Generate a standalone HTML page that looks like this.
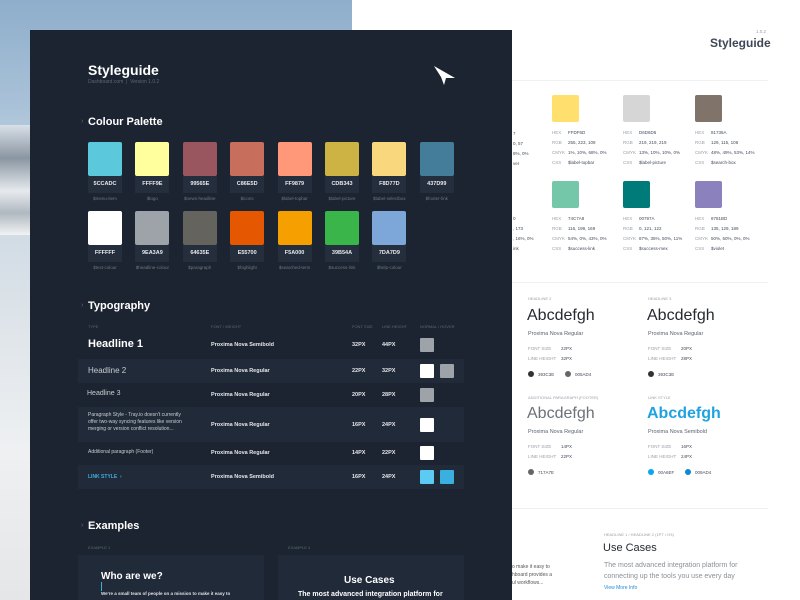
<!DOCTYPE html>
<html><head><meta charset="utf-8">
<style>
*{margin:0;padding:0;box-sizing:border-box}
body{width:800px;height:600px;overflow:hidden;position:relative;font-family:"Liberation Sans",sans-serif;background:#fff}
.bg{position:absolute;left:0;top:0;width:352px;height:600px;background:linear-gradient(180deg,#8eaecb 0%,#aac2d8 18%,#c9d6e2 30%,#dfe5ea 55%,#eef0f2 75%,#e4e6e8 100%)}
.mt{position:absolute;left:0;top:125px;width:30px;height:110px;background:linear-gradient(180deg,#d8e0e8 0%,#8a96a2 30%,#e6eaee 60%,#b0b8c0 80%,#f2f3f4 100%)}
.a{position:absolute;white-space:nowrap;line-height:1.15}
.dark{position:absolute;left:30px;top:30px;width:482px;height:570px;background:#1c2431}
.w{color:#fff}
.sw{position:absolute;width:34px;height:34px;border-radius:2px}
.lb{position:absolute;width:34px;height:17px;background:#252e3d;color:#e8eaee;font-size:5.5px;font-weight:bold;text-align:center;line-height:17px}
.nm{position:absolute;width:46px;color:#6d7686;font-size:4.5px;text-align:center}
.row{position:absolute;left:78px;width:386px;background:#212a39}
.t{font-size:5.5px;font-weight:bold;color:#e6e8ec}
.hd{font-size:4px;color:#5d6676}
.sq{position:absolute;width:14px;height:14px;border-radius:1px}
.g{color:#9aa0a8;font-size:4.5px}
.k{color:#444c5a;font-size:4.5px}
</style></head><body>
<div class="bg"></div><div class="mt"></div>
<div class="dark"></div>
<div class="a w" style="left:88px;top:63px;font-size:14px;font-weight:bold;line-height:1">Styleguide</div>
<div class="a" style="left:88px;top:80px;font-size:5px;color:#5d6676;line-height:1">Dashboard.com &nbsp;|&nbsp; Version 1.0.2</div>
<svg class="a" style="left:432px;top:64px" width="26" height="24" viewBox="0 0 26 24"><path d="M2 2 L23 14 L14 14 L12 21 L9 13 Z" fill="#fff"/></svg>

<div class="a" style="left:81px;top:118px;font-size:7px;color:#5d6676">›</div>
<div class="a w" style="left:88px;top:116px;font-size:11px;font-weight:bold">Colour Palette</div>
<div class="a" style="left:81px;top:302px;font-size:7px;color:#5d6676">›</div>
<div class="a w" style="left:88px;top:300px;font-size:11px;font-weight:bold">Typography</div>
<div class="a" style="left:81px;top:522px;font-size:7px;color:#5d6676">›</div>
<div class="a w" style="left:88px;top:520px;font-size:11px;font-weight:bold">Examples</div>

<div id="pal"></div>
<script>
var r1=[["#5cc8dc","5CCADC","$menu-item"],["#ffff9e","FFFF9E","$logo"],["#99565e","99565E","$news-headline"],["#c86e5d","C86E5D","$icons"],["#ff9879","FF9879","$label-topbar"],["#cdb343","CDB343","$label-picture"],["#f8d77d","F8D77D","$label-selectbox"],["#437d99","437D99","$footer-link"]];
var r2=[["#ffffff","FFFFFF","$text-colour"],["#9ea3a9","9EA3A9","$headline-colour"],["#64635e","64635E","$paragraph"],["#e55700","E55700","$highlight"],["#f5a000","F5A000","$searched-term"],["#39b54a","39B54A","$success-link"],["#7da7d9","7DA7D9","$help-colour"]];
var h="";
function row(r,y){r.forEach(function(c,i){var x=88+i*47.4;
h+='<div class="sw" style="left:'+x+'px;top:'+y+'px;background:'+c[0]+'"></div>';
h+='<div class="lb" style="left:'+x+'px;top:'+(y+34)+'px">'+c[1]+'</div>';
h+='<div class="nm a" style="left:'+(x-6)+'px;top:'+(y+54)+'px">'+c[2]+'</div>';});}
row(r1,142);row(r2,211);
document.getElementById("pal").innerHTML=h;
</script>

<div class="a hd" style="left:88px;top:325px">TYPE</div>
<div class="a hd" style="left:211px;top:325px">FONT / WEIGHT</div>
<div class="a hd" style="left:352px;top:325px">FONT SIZE</div>
<div class="a hd" style="left:382px;top:325px">LINE HEIGHT</div>
<div class="a hd" style="left:420px;top:325px">NORMAL / HOVER</div>

<div class="row" style="top:359px;height:24px"></div>
<div class="row" style="top:407px;height:35px"></div>
<div class="row" style="top:465px;height:24px"></div>

<div class="a w" style="left:88px;top:338px;font-size:11px;font-weight:bold">Headline 1</div>
<div class="a" style="left:88px;top:366px;font-size:8px;color:#c8ccd2">Headline 2</div>
<div class="a" style="left:87px;top:390px;font-size:7px;color:#c8ccd2">Headline 3</div>
<div class="a" style="left:88px;top:412px;font-size:5px;line-height:7px;color:#c8ccd2">Paragraph Style - Tray.io doesn't currently<br>offer two-way syncing features like version<br>merging or version conflict resolution...</div>
<div class="a" style="left:88px;top:450px;font-size:5px;color:#c8ccd2">Additional paragraph (Footer)</div>
<div class="a" style="left:88px;top:475px;font-size:5px;font-weight:bold;color:#3eaee0">LINK STYLE &nbsp;›</div>

<div class="a t" style="left:211px;top:342px">Proxima Nova Semibold</div>
<div class="a t" style="left:211px;top:368px">Proxima Nova Regular</div>
<div class="a t" style="left:211px;top:392px">Proxima Nova Regular</div>
<div class="a t" style="left:211px;top:422px">Proxima Nova Regular</div>
<div class="a t" style="left:211px;top:450px">Proxima Nova Regular</div>
<div class="a t" style="left:211px;top:474px">Proxima Nova Semibold</div>
<div class="a t" style="left:352px;top:342px">32PX</div><div class="a t" style="left:382px;top:342px">44PX</div>
<div class="a t" style="left:352px;top:368px">22PX</div><div class="a t" style="left:382px;top:368px">32PX</div>
<div class="a t" style="left:352px;top:392px">20PX</div><div class="a t" style="left:382px;top:392px">28PX</div>
<div class="a t" style="left:352px;top:422px">16PX</div><div class="a t" style="left:382px;top:422px">24PX</div>
<div class="a t" style="left:352px;top:450px">14PX</div><div class="a t" style="left:382px;top:450px">22PX</div>
<div class="a t" style="left:352px;top:474px">16PX</div><div class="a t" style="left:382px;top:474px">24PX</div>
<div class="sq" style="left:420px;top:338px;background:#9ea3a9"></div>
<div class="sq" style="left:420px;top:364px;background:#fff"></div><div class="sq" style="left:440px;top:364px;background:#9ea3a9"></div>
<div class="sq" style="left:420px;top:388px;background:#9ea3a9"></div>
<div class="sq" style="left:420px;top:418px;background:#fff"></div>
<div class="sq" style="left:420px;top:446px;background:#fff"></div>
<div class="sq" style="left:420px;top:470px;background:#5ccbf3"></div><div class="sq" style="left:440px;top:470px;background:#39b0e0"></div>

<div class="a hd" style="left:88px;top:546px">EXAMPLE 1</div>
<div class="a hd" style="left:288px;top:546px">EXAMPLE 4</div>
<div class="a" style="left:78px;top:555px;width:186px;height:45px;background:#212a39"></div>
<div class="a" style="left:278px;top:555px;width:186px;height:45px;background:#212a39"></div>
<div class="a w" style="left:101px;top:571px;font-size:10px;font-weight:bold">Who are we?</div>
<div class="a" style="left:101px;top:591px;font-size:4.5px;color:#e0e2e6;font-weight:bold">We're a small team of people on a mission to make it easy to</div>
<div class="a" style="left:101px;top:582px;width:1px;height:9px;background:#3eaee0"></div>
<div class="a w" style="left:344px;top:575px;font-size:10px;font-weight:bold">Use Cases</div>
<div class="a w" style="left:298px;top:591px;font-size:7px;font-weight:bold">The most advanced integration platform for</div>

<div class="a" style="left:756px;top:29px;font-size:4.5px;color:#9aa0a8">1.0.2</div>
<div class="a" style="left:710px;top:37px;font-size:12px;font-weight:bold;color:#3e4756">Styleguide</div>
<div class="a" style="left:512px;top:80px;width:256px;height:1px;background:#eef0f2"></div>
<div id="rp"></div>
<script>
var c=[[552,95,"#ffdf6d",["FFDF6D","255, 223, 109","1%, 10%, 68%, 0%","$label-topbar"]],[623,95,"#d6d6d6",["D6D6D6","219, 219, 219","13%, 10%, 10%, 0%","$label-picture"]],[695,95,"#7f736a",["81736A","129, 115, 106","48%, 49%, 53%, 14%","$search-box"]],
[552,181,"#74c7a8",["74C7A8","116, 199, 169","54%, 0%, 43%, 0%","$success-link"]],[623,181,"#007b7a",["00797A","0, 121, 122","87%, 35%, 50%, 11%","$success-mex"]],[695,181,"#8b81bd",["8781BD","135, 129, 189","50%, 50%, 0%, 0%","$violet"]]];
var h="",L=["HEX","RGB","CMYK","CSS"];
c.forEach(function(s){h+='<div class="sw" style="left:'+s[0]+'px;top:'+s[1]+'px;width:27px;height:27px;background:'+s[2]+'"></div>';
for(var i=0;i<4;i++){var y=s[1]+35+i*10;h+='<div class="a g" style="left:'+s[0]+'px;top:'+y+'px">'+L[i]+'</div><div class="a k" style="left:'+(s[0]+16)+'px;top:'+y+'px">'+s[3][i]+'</div>';}});
[133,143,153,163,218,228,238,248].forEach(function(y,i){h+='<div class="a k" style="left:513px;top:'+(y-2)+'px">'+["7","0, 57","8%, 0%","ver","0",", 173",", 16%, 0%","ink"][i]+'</div>';});
document.getElementById("rp").innerHTML=h;
</script>
<div class="a" style="left:512px;top:282px;width:256px;height:1px;background:#eef0f2"></div>
<div class="a g" style="left:528px;top:297px;font-size:4px">HEADLINE 2</div>
<div class="a g" style="left:648px;top:297px;font-size:4px">HEADLINE 3</div>
<div class="a" style="left:527px;top:307px;font-size:16px;color:#262a30">Abcdefgh</div>
<div class="a" style="left:647px;top:307px;font-size:16px;color:#262a30">Abcdefgh</div>
<div class="a" style="left:528px;top:331px;font-size:5.5px;color:#5a6270">Proxima Nova Regular</div>
<div class="a" style="left:648px;top:331px;font-size:5.5px;color:#5a6270">Proxima Nova Regular</div>
<div class="a g" style="left:528px;top:346px">FONT SIZE</div><div class="a k" style="left:561px;top:346px">22PX</div>
<div class="a g" style="left:528px;top:356px">LINE HEIGHT</div><div class="a k" style="left:561px;top:356px">32PX</div>
<div class="a g" style="left:648px;top:346px">FONT SIZE</div><div class="a k" style="left:681px;top:346px">20PX</div>
<div class="a g" style="left:648px;top:356px">LINE HEIGHT</div><div class="a k" style="left:681px;top:356px">28PX</div>
<div class="a" style="left:528px;top:371px;width:6px;height:6px;border-radius:50%;background:#333"></div><div class="a k" style="left:538px;top:372px">393C3E</div>
<div class="a" style="left:565px;top:371px;width:6px;height:6px;border-radius:50%;background:#666"></div><div class="a k" style="left:575px;top:372px">005AD4</div>
<div class="a" style="left:648px;top:371px;width:6px;height:6px;border-radius:50%;background:#333"></div><div class="a k" style="left:658px;top:372px">393C3E</div>

<div class="a g" style="left:528px;top:396px;font-size:4px">ADDITIONAL PARAGRAPH (FOOTER)</div>
<div class="a g" style="left:648px;top:396px;font-size:4px">LINK STYLE</div>
<div class="a" style="left:527px;top:405px;font-size:16px;color:#6d7178">Abcdefgh</div>
<div class="a" style="left:647px;top:405px;font-size:16px;font-weight:bold;color:#1fa3e0">Abcdefgh</div>
<div class="a" style="left:528px;top:429px;font-size:5.5px;color:#5a6270">Proxima Nova Regular</div>
<div class="a" style="left:648px;top:429px;font-size:5.5px;color:#5a6270">Proxima Nova Semibold</div>
<div class="a g" style="left:528px;top:444px">FONT SIZE</div><div class="a k" style="left:561px;top:444px">14PX</div>
<div class="a g" style="left:528px;top:454px">LINE HEIGHT</div><div class="a k" style="left:561px;top:454px">22PX</div>
<div class="a g" style="left:648px;top:444px">FONT SIZE</div><div class="a k" style="left:681px;top:444px">16PX</div>
<div class="a g" style="left:648px;top:454px">LINE HEIGHT</div><div class="a k" style="left:681px;top:454px">24PX</div>
<div class="a" style="left:528px;top:469px;width:6px;height:6px;border-radius:50%;background:#666"></div><div class="a k" style="left:538px;top:470px">717A7E</div>
<div class="a" style="left:648px;top:469px;width:6px;height:6px;border-radius:50%;background:#0aa6ef"></div><div class="a k" style="left:658px;top:470px">00A6EF</div>
<div class="a" style="left:685px;top:469px;width:6px;height:6px;border-radius:50%;background:#0a8ad4"></div><div class="a k" style="left:695px;top:470px">009AD4</div>

<div class="a" style="left:512px;top:508px;width:256px;height:1px;background:#eef0f2"></div>
<div class="a g" style="left:604px;top:533px;font-size:4px">HEADLINE 1 / HEADLINE 2 (1PT • H3)</div>
<div class="a" style="left:603px;top:542px;font-size:11px;color:#262a30">Use Cases</div>
<div class="a" style="left:604px;top:560px;font-size:7px;line-height:11px;color:#8a9098">The most advanced integration platform for<br>connecting up the tools you use every day</div>
<div class="a" style="left:604px;top:586px;font-size:5px;color:#1f8ad4">View More Info</div>
<div class="a" style="left:512px;top:563px;font-size:5px;line-height:8px;color:#555">o make it easy to<br>hboard provides a<br>ul workflows...</div>
</body></html>
